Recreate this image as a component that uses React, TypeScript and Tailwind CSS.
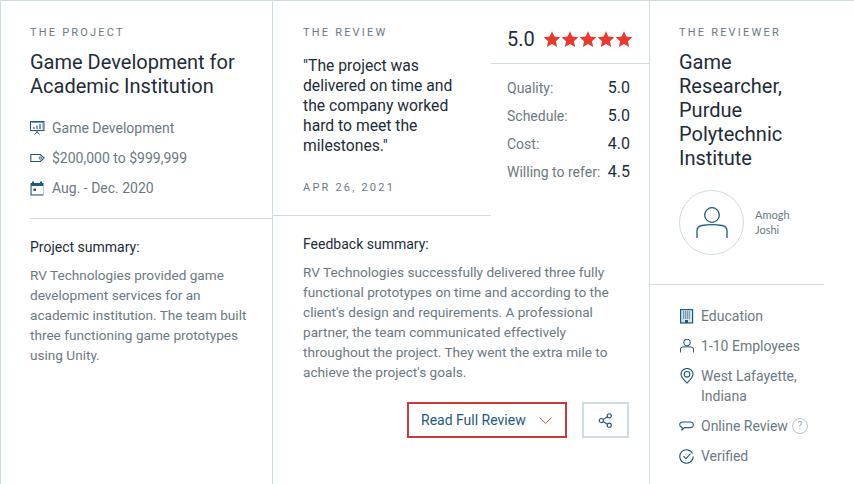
const ICON = "#1f5a7d";

const PresentationIcon = () => (
  <svg width="15" height="15" viewBox="0 0 15 15" fill="none" stroke={ICON} strokeWidth="1">
    <rect x="0.5" y="0.5" width="13.5" height="9" />
    <path d="M1.5 1.500h11.500v7" strokeWidth="0.6" />
    <path d="M4 8V6M7 8V4.500M10 8V3" strokeWidth="1.2" />
    <path d="M7 9.500v1.500M7 11L4.500 13.500M7 11L9.500 13.500" />
  </svg>
);

const TagIcon = () => (
  <svg width="15" height="15" viewBox="0 0 15 15" fill="none" stroke={ICON} strokeWidth="1.1">
    <path d="M0.8 3.500h9.500l3.800 3.500-3.800 3.500H0.800z" />
    <circle cx="10.300" cy="7" r="1.200" strokeWidth="0.9" />
  </svg>
);

const CalendarIcon = () => (
  <svg width="15" height="15" viewBox="0 0 15 15" fill="none">
    <path d="M2 0.500h2v1.500h6V0.500h2v1.500h1.500v12.500H0.500V2H2z" fill={ICON} />
    <rect x="1.600" y="5" width="11.800" height="8.400" fill="#fff" />
    <rect x="3.500" y="7.500" width="2.500" height="2.500" fill={ICON} />
  </svg>
);

const BuildingIcon = () => (
  <svg width="14" height="15" viewBox="0 0 14 15" fill="none">
    <rect x="0.600" y="0.600" width="12" height="13.400" fill="#d5e1e8" stroke={ICON} strokeWidth="1.200" />
    <path d="M3 3h7.500M3 5h7.500M3 7h7.500M3 9h7.500" stroke={ICON} strokeWidth="1.200" strokeDasharray="1.200 0.700" />
    <rect x="5" y="11" width="3" height="3" fill={ICON} />
  </svg>
);

const PersonIcon = ({ size = 14, sw = 2.4 }: { size?: number; sw?: number }) => (
  <svg width={size} height={size} viewBox="0 0 32 32" fill="none" stroke={ICON} strokeWidth={sw}>
    <circle cx="16" cy="8" r="7.300" />
    <path d="M1 31v-7c0-3 2-5 5-5.500 6-1 14-1 20 0 3 .5 5 2.500 5 5.500v7" />
  </svg>
);

const PinIcon = () => (
  <svg width="14" height="16" viewBox="0 0 14 16" fill="none" stroke={ICON} strokeWidth="1.100">
    <path d="M7 15C4 12 1 9.500 1 6.300a6 5.800 0 0 1 12 0C13 9.500 10 12 7 15z" />
    <circle cx="7" cy="6.300" r="2.800" />
  </svg>
);

const ChatIcon = () => (
  <svg width="15" height="15" viewBox="0 0 15 15" fill="none" stroke={ICON} strokeWidth="1.100">
    <path d="M4 3h7c2 0 3.300 1 3.300 2.800S13 8.600 11 8.600H5.500L3 11V8.400C1.500 8 .7 7 .7 5.800.7 4 2 3 4 3z" />
  </svg>
);

const CheckCircleIcon = () => (
  <svg width="15" height="15" viewBox="0 0 15 15" fill="none" stroke={ICON} strokeWidth="1.100">
    <path d="M13.500 4.500A6.700 6.700 0 1 0 14.200 7.500" />
    <path d="M4.500 7.200l2.500 2.500 4.500-5" />
  </svg>
);

const ShareIcon = () => (
  <svg width="15" height="15" viewBox="0 0 16 16" fill="none" stroke={ICON} strokeWidth="1.200">
    <circle cx="3.500" cy="8" r="2.200" />
    <circle cx="12" cy="3" r="2.200" />
    <circle cx="12" cy="13" r="2.200" />
    <path d="M5.500 7l4.600-3M5.500 9l4.600 3" />
  </svg>
);

const Star = () => (
  <svg width="18" height="18" viewBox="0 0 24 24" fill="#e93a2f">
    <path d="M12 1.500l3.200 7.300 7.900.8-5.900 5.300 1.700 7.800L12 18.700l-6.900 4 1.700-7.800L.9 9.600l7.900-.8z" />
  </svg>
);

const Label = ({ children }: { children: string }) => (
  <p className="text-[11px] leading-[14px] tracking-[0.2em] text-[#6b7a82]">{children}</p>
);

const Meta = ({ icon, children }: { icon: React.ReactNode; children: React.ReactNode }) => (
  <div className="flex gap-[7px] text-[14px] leading-[20px] text-[#6b7a82]">
    <span className="flex h-5 w-[15px] shrink-0 items-center justify-center">{icon}</span>
    <div>{children}</div>
  </div>
);

const scores = [
  ["Quality:", "5.0"],
  ["Schedule:", "5.0"],
  ["Cost:", "4.0"],
  ["Willing to refer:", "4.5"]
];

export default function App() {
  return (
    <div className="flex h-[484px] w-[854px] overflow-hidden border-t border-l border-[#cfdde3] bg-white font-['Roboto',sans-serif]">
      <section className="w-[272px] shrink-0 border-r border-[#cfdde3]">
        <div className="ml-[29px] border-b border-[#cfdde3] pt-[25px] pb-[20px]">
          <Label>THE PROJECT</Label>
          <h2 className="mt-[10px] text-[20px] leading-[24px] text-[#1d2d38]">
            Game Development for Academic Institution
          </h2>
          <div className="mt-[20px] flex flex-col gap-[10px]">
            <Meta icon={<PresentationIcon />}>Game Development</Meta>
            <Meta icon={<TagIcon />}>$200,000 to $999,999</Meta>
            <Meta icon={<CalendarIcon />}>Aug. - Dec. 2020</Meta>
          </div>
        </div>
        <div className="pl-[29px] pr-[20px] pt-[18px]">
          <h3 className="text-[14px] leading-[20px] text-[#1d2d38]">Project summary:</h3>
          <p className="mt-[8px] text-[13.6px] leading-[20px] text-[#6b7a82]">
            RV Technologies provided game development services for an academic institution. The team built three functioning game prototypes using Unity.
          </p>
        </div>
      </section>

      <section className="w-[377px] shrink-0 border-r border-[#cfdde3]">
        <div className="flex h-[215px]">
          <div className="w-[218px] shrink-0 border-b border-[#cfdde3] pl-[30px] pt-[25px]">
            <Label>THE REVIEW</Label>
            <p className="mt-[16px] w-[160px] text-[15.7px] leading-[20px] text-[#1d2d38]">
              "The project was delivered on time and the company worked hard to meet the milestones."
            </p>
            <p className="mt-[25px] text-[11px] leading-[14px] tracking-[0.2em] text-[#6b7a82]">APR 26, 2021</p>
          </div>
          <div className="flex-1">
            <div className="flex h-[63px] items-center gap-[8px] border-b border-[#cfdde3] pl-[16px] pt-[14px]">
              <span className="text-[20px] text-[#1d2d38]">5.0</span>
              <span className="flex">
                {[0, 1, 2, 3, 4].map((i) => (
                  <Star key={i} />
                ))}
              </span>
            </div>
            <div className="mt-[14px] flex flex-col gap-[8px] pl-[16px] pr-[19px]">
              {scores.map(([name, value]) => (
                <div key={name} className="flex justify-between text-[14px] leading-[20px]">
                  <span className="text-[#6b7a82]">{name}</span>
                  <span className="text-[16px] text-[#1d2d38]">{value}</span>
                </div>
              ))}
            </div>
          </div>
        </div>
        <div className="pl-[30px] pr-[20px] pt-[18px]">
          <h3 className="text-[14px] leading-[20px] text-[#1d2d38]">Feedback summary:</h3>
          <p className="mt-[8px] text-[13.65px] leading-[20px] text-[#6b7a82]">
            RV Technologies successfully delivered three fully functional prototypes on time and according to the client's design and requirements. A professional partner, the team communicated effectively throughout the project. They went the extra mile to achieve the project's goals.
          </p>
          <div className="mt-[20px] flex justify-end gap-[15px]">
            <button className="flex h-[36px] w-[160px] items-center gap-[13px] border-2 border-[#c93a3a] pl-[12px] text-[14px] text-[#1f5a7d]">
              Read Full Review
              <svg width="13" height="7" viewBox="0 0 13 7" fill="none" stroke="#d9534f" strokeWidth="1">
                <path d="M0.500 0.500l6 6 6-6" />
              </svg>
            </button>
            <button className="flex h-[36px] w-[47px] items-center justify-center border-2 border-[#cfdde3]">
              <ShareIcon />
            </button>
          </div>
        </div>
      </section>

      <section className="flex-1">
        <div className="pl-[29px] pt-[25px]">
          <Label>THE REVIEWER</Label>
          <h2 className="mt-[10px] w-[120px] text-[20px] leading-[24px] text-[#1d2d38]">
            Game Researcher, Purdue Polytechnic Institute
          </h2>
        </div>
        <div className="mt-[20px] h-[94px] pl-[29px]">
          <div className="flex items-center gap-[11px]">
            <div className="flex h-[65px] w-[65px] items-center justify-center rounded-full border border-[#cfdde3]">
              <PersonIcon size={32} sw={1.300} />
            </div>
            <p className="mb-[2px] font-['Lato',sans-serif] text-[11px] leading-[15px] text-[#6b7a82]">
              Amogh
              <br />
              Joshi
            </p>
          </div>
        </div>
        <div className="flex w-[174px] flex-col gap-[10px] border-t border-[#cfdde3] pl-[29px] pt-[21px]">
          <Meta icon={<BuildingIcon />}>Education</Meta>
          <Meta icon={<PersonIcon />}>1-10 Employees</Meta>
          <Meta icon={<PinIcon />}>West Lafayette, Indiana</Meta>
          <Meta icon={<ChatIcon />}>
            <span className="flex items-center gap-[4px]">
              Online Review
              <span className="flex h-4 w-4 items-center justify-center rounded-full border border-[#b8c4ca] text-[10px] text-[#9aa7ad]">?</span>
            </span>
          </Meta>
          <Meta icon={<CheckCircleIcon />}>Verified</Meta>
        </div>
      </section>
    </div>
  );
}
